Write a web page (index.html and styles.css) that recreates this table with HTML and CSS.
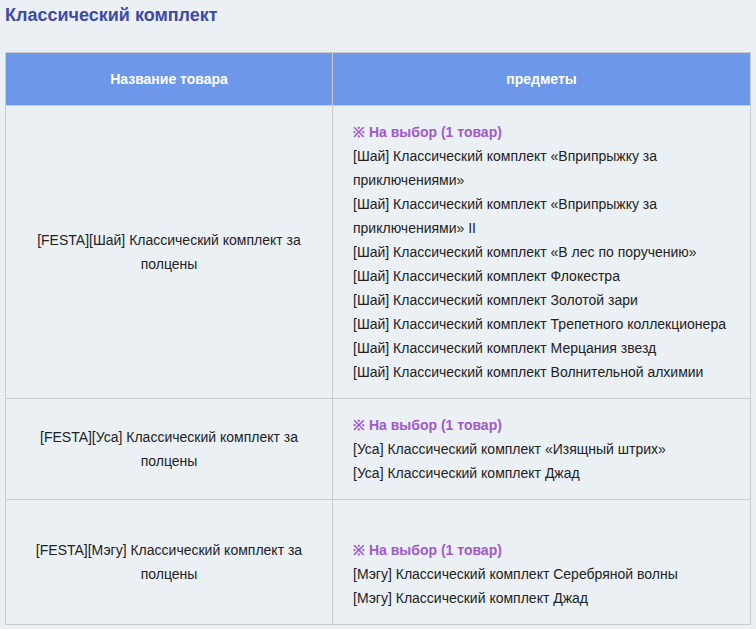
FILE: index.html
```html
<!DOCTYPE html>
<html lang="ru">
<head>
<meta charset="utf-8">
<link rel="stylesheet" href="styles.css">
</head>
<body>
<h3 class="title">Классический комплект</h3>
<table class="items">
  <thead>
    <tr><th class="col-name">Название товара</th><th>предметы</th></tr>
  </thead>
  <tbody>
    <tr>
      <td class="name">[FESTA][Шай] Классический комплект за полцены</td>
      <td class="list">
        <span class="pick">※ На выбор (1 товар)</span><br>
        [Шай] Классический комплект «Вприпрыжку за приключениями»<br>
        [Шай] Классический комплект «Вприпрыжку за приключениями» II<br>
        [Шай] Классический комплект «В лес по поручению»<br>
        [Шай] Классический комплект Флокестра<br>
        [Шай] Классический комплект Золотой зари<br>
        [Шай] Классический комплект Трепетного коллекционера<br>
        [Шай] Классический комплект Мерцания звезд<br>
        [Шай] Классический комплект Волнительной алхимии
      </td>
    </tr>
    <tr>
      <td class="name">[FESTA][Уса] Классический комплект за полцены</td>
      <td class="list">
        <span class="pick">※ На выбор (1 товар)</span><br>
        [Уса] Классический комплект «Изящный штрих»<br>
        [Уса] Классический комплект Джад
      </td>
    </tr>
    <tr>
      <td class="name">[FESTA][Мэгу] Классический комплект за полцены</td>
      <td class="list">
        <br>
        <span class="pick">※ На выбор (1 товар)</span><br>
        [Мэгу] Классический комплект Серебряной волны<br>
        [Мэгу] Классический комплект Джад
      </td>
    </tr>
  </tbody>
</table>
</body>
</html>
```
FILE: styles.css
```css
html, body {
  background: #ebf0f5;
}
body {
  margin: 0;
  padding: 0 5px;
  font-family: "Liberation Sans", Arial, sans-serif;
  color: #222;
}
.title {
  margin: 4px 0 0;
  font-size: 18px;
  line-height: 22px;
  font-weight: bold;
  color: #3c4aa5;
  height: 48px;
}
.items {
  width: 746px;
  border-collapse: collapse;
  font-size: 14px;
  line-height: 24px;
}
.items th, .items td {
  border: 1px solid #cbcbcb;
  padding: 14px 20px;
}
.items th {
  background: #6d97e8;
  color: #fff;
  font-weight: bold;
  text-align: center;
}
.col-name {
  width: 286px;
}
.name {
  text-align: center;
  vertical-align: middle;
}
.list {
  text-align: left;
}
.pick {
  color: #a05ac8;
  font-weight: bold;
}
```
